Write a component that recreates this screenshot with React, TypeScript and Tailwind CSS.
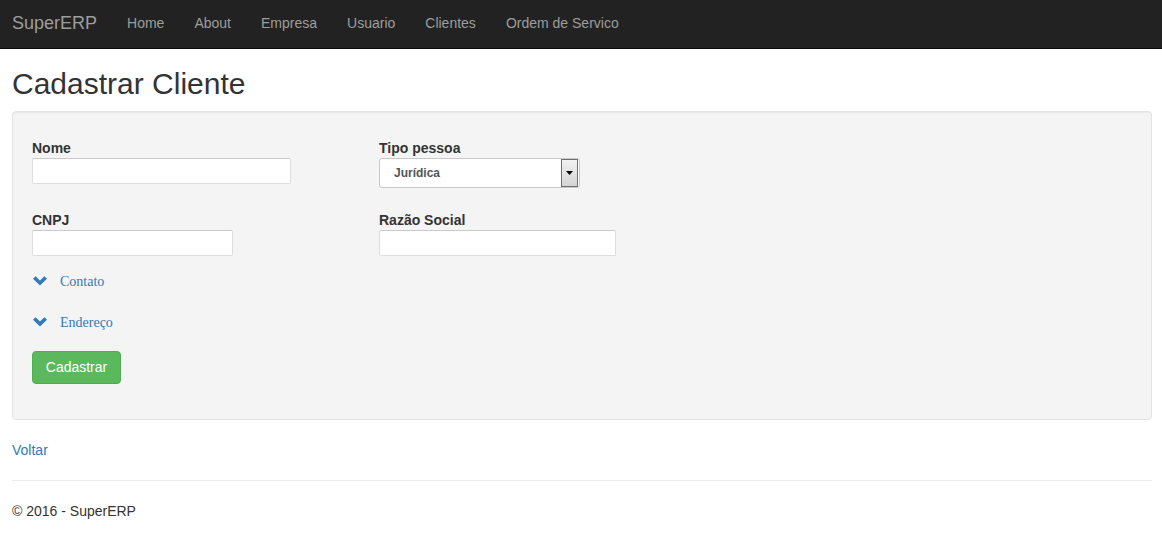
import React from 'react'

const navItems = ['Home', 'About', 'Empresa', 'Usuario', 'Clientes', 'Ordem de Servico']

const Chevron = () => (
  <svg width="14" height="10" viewBox="0 0 14 10" className="shrink-0">
    <polygon points="0,2.8 2.6,0.2 7,4.4 11.4,0.2 14,2.8 7,9.6" fill="#337ab7" />
  </svg>
)

const Field = ({ label, width }: { label: string; width: string }) => (
  <div>
    <label className="block h-5 text-[14px] font-bold leading-5 text-[#333]">{label}</label>
    <input
      className={`block h-[26px] ${width} rounded-[2px] border border-[#ddd] border-t-[#c9c9c9] bg-white outline-none`}
    />
  </div>
)

const Collapse = ({ text }: { text: string }) => (
  <div className="flex h-5 items-center">
    <span className="ml-px">
      <Chevron />
    </span>
    <a href="#" className="ml-[13px] font-['Liberation_Serif',serif] text-[14px] text-[#337ab7]">
      {text}
    </a>
  </div>
)

export default function App() {
  return (
    <div className="min-h-[546px] bg-white font-['Liberation_Sans',Arial,sans-serif] text-[14px] text-[#333]">
      <nav className="flex h-[49px] items-center border-b border-[#080808] bg-[#222] pb-[2px]">
        <span className="pl-3 pr-[15px] text-[18px] text-[#9d9d9d]">SuperERP</span>
        <ul className="flex">
          {navItems.map((item) => (
            <li key={item} className="px-[15px] text-[14px] text-[#9d9d9d]">
              {item}
            </li>
          ))}
        </ul>
      </nav>

      <main className="pl-3 pr-[10px]">
        <h2 className="mt-[18px] mb-[11px] text-[30px] leading-[33px] text-[#333]">Cadastrar Cliente</h2>

        <div className="rounded-[4px] border border-[#e3e3e3] bg-[#f4f4f4] px-[19px] pt-[26px] pb-[35px] shadow-[inset_0_1px_1px_rgba(0,0,0,0.05)]">
          <div className="flex">
            <div className="w-[347px]">
              <Field label="Nome" width="w-[259px]" />
            </div>
            <div>
              <label className="block h-5 text-[14px] font-bold leading-5 text-[#333]">Tipo pessoa</label>
              <div className="flex h-[30px] w-[201px] items-center justify-between rounded-[3px] border border-[#c8c8c8] bg-white pr-px">
                <span className="pl-[14px] text-[12px] font-bold text-[#555]">Jurídica</span>
                <span className="flex h-[28px] w-[17px] items-center justify-center border border-[#707070] bg-gradient-to-b from-[#f2f2f2] to-[#d4d4d4]">
                  <svg width="7" height="4" viewBox="0 0 7 4">
                    <polygon points="0,0 7,0 3.5,4" fill="#000" />
                  </svg>
                </span>
              </div>
            </div>
          </div>

          <div className="mt-[22px] flex">
            <div className="w-[347px]">
              <Field label="CNPJ" width="w-[201px]" />
            </div>
            <Field label="Razão Social" width="w-[237px]" />
          </div>

          <div className="mt-[15px]">
            <Collapse text="Contato" />
          </div>
          <div className="mt-[21px]">
            <Collapse text="Endereço" />
          </div>

          <button className="mt-[19px] h-[33px] w-[89px] rounded-[4px] border border-[#4cae4c] bg-[#5cb85c] text-[14px] text-white">
            Cadastrar
          </button>
        </div>

        <a href="#" className="mt-5 block leading-5 text-[#337ab7]">
          Voltar
        </a>
        <hr className="mt-5 border-t border-[#eee]" />
        <footer className="mt-5 leading-5">© 2016 - SuperERP</footer>
      </main>
    </div>
  )
}
